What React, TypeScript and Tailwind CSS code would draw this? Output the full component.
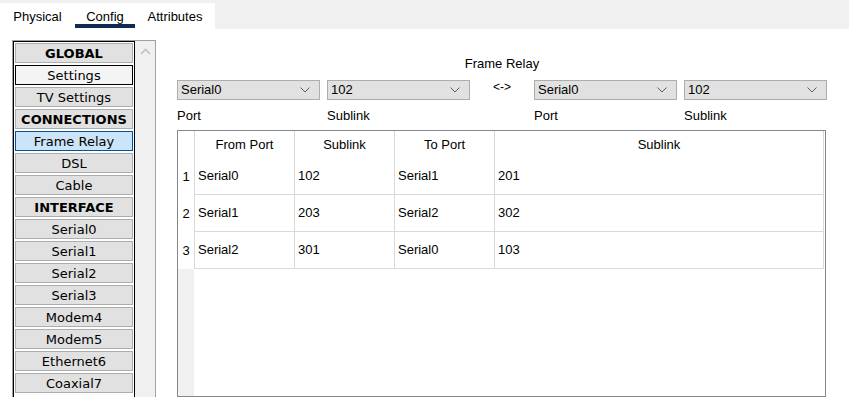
import React from "react";

const listItems: { label: string; kind: "head" | "item" | "focus" | "sel" }[] = [
  { label: "GLOBAL", kind: "head" },
  { label: "Settings", kind: "focus" },
  { label: "TV Settings", kind: "item" },
  { label: "CONNECTIONS", kind: "head" },
  { label: "Frame Relay", kind: "sel" },
  { label: "DSL", kind: "item" },
  { label: "Cable", kind: "item" },
  { label: "INTERFACE", kind: "head" },
  { label: "Serial0", kind: "item" },
  { label: "Serial1", kind: "item" },
  { label: "Serial2", kind: "item" },
  { label: "Serial3", kind: "item" },
  { label: "Modem4", kind: "item" },
  { label: "Modem5", kind: "item" },
  { label: "Ethernet6", kind: "item" },
  { label: "Coaxial7", kind: "item" },
];

const rows = [
  ["1", "Serial0", "102", "Serial1", "201"],
  ["2", "Serial1", "203", "Serial2", "302"],
  ["3", "Serial2", "301", "Serial0", "103"],
];

function Chevron() {
  return (
    <svg width="10" height="6" viewBox="0 0 10 6" className="shrink-0">
      <path d="M0.5 0.5 L5 5 L9.5 0.5" fill="none" stroke="#606060" strokeWidth="1" />
    </svg>
  );
}

function Select({ value }: { value: string }) {
  return (
    <div className="w-[143px] h-[20px] border border-[#adadad] bg-[#e1e1e1] flex items-center justify-between pl-[3px] pr-[9px] text-[13px] leading-[16px] text-black">
      <span>{value}</span>
      <Chevron />
    </div>
  );
}

export default function App() {
  return (
    <div
      className="w-[849px] h-[397px] overflow-hidden bg-white flex flex-col"
      style={{ fontFamily: '"Liberation Sans", Arial, sans-serif' }}
    >
      {/* Tab bar */}
      <div className="h-[29px] bg-[#f0f0f0] flex shrink-0">
        <div className="mt-[3px] h-[26px] w-[215px] bg-white flex text-[13px] leading-[16px] text-black">
          <div className="w-[75px] flex items-center justify-center pt-[2px]">Physical</div>
          <div className="w-[60px] relative flex items-center justify-center pt-[2px]">
            Config
            <div className="absolute left-0 right-0 top-[21px] h-[4px] bg-[#0f2b4f]" />
          </div>
          <div className="w-[80px] flex items-center justify-center pt-[2px]">Attributes</div>
        </div>
      </div>

      {/* Main */}
      <div className="flex flex-1 pt-[11px] pl-[12px] min-h-0">
        {/* Left panel */}
        <div className="w-[144px] h-[380px] border border-[#a0a0a0] flex shrink-0">
          <div
            className="w-[122px] h-full border border-black p-[1px] flex flex-col gap-[2px]"
            style={{ fontFamily: '"DejaVu Sans", Verdana, sans-serif' }}
          >
            {listItems.map((it) => {
              const base =
                "h-[20px] shrink-0 flex items-center justify-center pt-[1px] text-[13px] leading-[16px] text-black border";
              const cls =
                it.kind === "sel"
                  ? "bg-[#cce4f7] border-[#005499]"
                  : it.kind === "focus"
                  ? "bg-[#f4f4f4] border-black"
                  : "bg-[#e1e1e1] border-[#adadad]";
              return (
                <div key={it.label} className={`${base} ${cls} ${it.kind === "head" ? "font-bold" : ""}`}>
                  {it.label}
                </div>
              );
            })}
          </div>
          <div className="w-[20px] h-full bg-[#f0f0f0] flex justify-center pt-[7px]">
            <svg width="11" height="7" viewBox="0 0 11 7">
              <path d="M1 6 L5.5 1.5 L10 6" fill="none" stroke="#c2c2c2" strokeWidth="1.6" />
            </svg>
          </div>
        </div>

        {/* Right content */}
        <div className="ml-[21px] w-[650px] flex flex-col pt-[16px] text-[13px] leading-[16px] text-black">
          <div className="text-center">Frame Relay</div>
          <div className="flex mt-[8px]">
            <Select value="Serial0" />
            <div className="ml-[7px]">
              <Select value="102" />
            </div>
            <div className="w-[64px] flex justify-center text-[12px] leading-[14px]">&lt;-&gt;</div>
            <Select value="Serial0" />
            <div className="ml-[7px]">
              <Select value="102" />
            </div>
          </div>
          <div className="flex mt-[8px]">
            <div className="w-[150px]">Port</div>
            <div className="w-[207px]">Sublink</div>
            <div className="w-[150px]">Port</div>
            <div>Sublink</div>
          </div>

          {/* Table */}
          <div className="mt-[6px] w-[649px] h-[280px] border border-[#828790] flex flex-col">
            <div className="flex h-[27px] shrink-0">
              <div className="w-[16px]" />
              <div className="w-[100px] border-l border-[#d9d9d9] flex items-center justify-center">From Port</div>
              <div className="w-[100px] border-l border-[#d9d9d9] flex items-center justify-center">Sublink</div>
              <div className="w-[100px] border-l border-[#d9d9d9] flex items-center justify-center">To Port</div>
              <div className="w-[330px] border-l border-r border-[#d9d9d9] flex items-center justify-center">Sublink</div>
            </div>
            {rows.map((r) => (
              <div key={r[0]} className="flex h-[37px] shrink-0">
                <div className="w-[16px] flex items-center justify-center">{r[0]}</div>
                <div className="w-[100px] border-l border-b border-[#d9d9d9] flex items-center pl-[3px]">{r[1]}</div>
                <div className="w-[100px] border-l border-b border-[#d9d9d9] flex items-center pl-[3px]">{r[2]}</div>
                <div className="w-[100px] border-l border-b border-[#d9d9d9] flex items-center pl-[3px]">{r[3]}</div>
                <div className="w-[330px] border-l border-r border-b border-[#d9d9d9] flex items-center pl-[3px]">{r[4]}</div>
              </div>
            ))}
            <div className="flex flex-1">
              <div className="w-[16px] bg-[#f0f0f0]" />
              <div className="flex-1 bg-white" />
            </div>
          </div>
        </div>
      </div>
    </div>
  );
}
